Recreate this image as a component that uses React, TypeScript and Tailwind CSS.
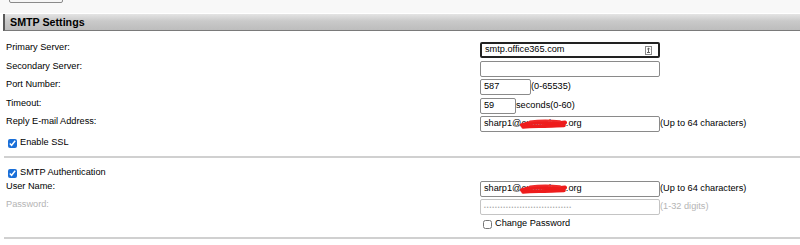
import React from 'react';

const font = { fontFamily: '"Liberation Sans", Arial, sans-serif' };

interface FieldRowProps {
    label: string;
    children: React.ReactNode;
    disabled?: boolean;
}

const FieldRow = ({ label, children, disabled }: FieldRowProps) => (
    <div className="flex items-start h-[18.5px]">
        <div className={`w-[480px] pl-[6px] leading-[11px] ${disabled ? 'text-[#b4b4b4]' : 'text-black'}`}>
            {label}
        </div>
        <div className="flex items-center">{children}</div>
    </div>
);

const Box = ({ w, children, focused, disabled }: { w: string; children?: React.ReactNode; focused?: boolean; disabled?: boolean }) => (
    <div
        className={`relative h-[16px] ${w} flex items-center px-[3px] rounded-[2px] ${
            focused
                ? 'border-2 border-[#222] px-[2px]'
                : disabled
                ? 'border border-[#c4c4c4]'
                : 'border border-[#8a8a8a]'
        }`}
    >
        {children}
    </div>
);

// red marker scribble that hides part of the address
const Scribble = () => (
    <svg className="absolute left-[39px] top-[2px]" width="48" height="11" viewBox="0 0 48 11">
        <path d="M2 6 C10 3 18 3 26 4 S40 4 45 3.5" stroke="#ee1c1c" strokeWidth="4" fill="none" strokeLinecap="round" />
        <path d="M3 8 C12 6.5 22 7.5 32 7 S42 6.5 44 6.5" stroke="#ee1c1c" strokeWidth="3.5" fill="none" strokeLinecap="round" />
        <path d="M10 2.5 C20 1.2 30 1.4 40 2.2" stroke="#f02a2a" strokeWidth="2" fill="none" strokeLinecap="round" />
    </svg>
);

const Check = ({ checked }: { checked: boolean }) => (
    <input
        type="checkbox"
        defaultChecked={checked}
        className="w-[9px] h-[9px] m-0 accent-[#1a6fd8] shrink-0"
    />
);

const App = () => {
    return (
        <div className="w-[800px] h-[245px] bg-white overflow-hidden text-[9.2px]" style={font}>
            {/* top strip with cut-off button */}
            <div className="h-[13px] bg-[#f8f8f8] overflow-hidden flow-root">
                <div className="ml-[9px] -mt-[14px] w-[54px] h-[17px] border border-[#8a8a8a] bg-[#f6f6f6] rounded-[2px]" />
            </div>

            {/* Section header */}
            <div className="mt-[1px] ml-[3px] h-[17px] border-l-2 border-[#5a5a5a] border-b border-b-[#7a7a7a] bg-[linear-gradient(to_bottom,#e4e4e4,#c9c9c9_45%,#bdbdbd)] flex items-center pl-[5px]">
                <span className="font-bold text-[10.7px] text-black">SMTP Settings</span>
            </div>

            <div className="pt-[11px]">
                <FieldRow label="Primary Server:">
                    <Box w="w-[180px]" focused>
                        <span>smtp.office365.com</span>
                        {/* autofill key icon */}
                        <svg className="absolute right-[6px] top-[2px]" width="7" height="9" viewBox="0 0 7 9">
                            <rect x="0.5" y="0.5" width="6" height="8" fill="none" stroke="#8a8a8a" />
                            <path d="M3.5 2 L3.5 6 M2.2 3.3 L3.5 2 L4.8 3.3 M2 6.5 L5 6.5" stroke="#555" strokeWidth="0.9" fill="none" />
                        </svg>
                    </Box>
                </FieldRow>
                <FieldRow label="Secondary Server:">
                    <Box w="w-[180px]" />
                </FieldRow>
                <FieldRow label="Port Number:">
                    <Box w="w-[51px]">587</Box>
                    <span>(0-65535)</span>
                </FieldRow>
                <FieldRow label="Timeout:">
                    <Box w="w-[36px]">59</Box>
                    <span>seconds(0-60)</span>
                </FieldRow>
                <FieldRow label="Reply E-mail Address:">
                    <Box w="w-[180px]">
                        <span>sharp1@exampleco.org</span>
                        <Scribble />
                    </Box>
                    <span>(Up to 64 characters)</span>
                </FieldRow>

                <div className="flex items-center gap-[3px] pl-[8px] mt-[3px] h-[11px]">
                    <Check checked />
                    <span>Enable SSL</span>
                </div>
            </div>

            <div className="ml-[4px] mt-[7px] h-[2px] bg-[#d0d0d0]" />

            <div className="pt-[10px]">
                <div className="flex items-center gap-[3px] pl-[8px] h-[11px]">
                    <Check checked />
                    <span>SMTP Authentication</span>
                </div>
                <div className="mt-[2px]">
                    <FieldRow label="User Name:">
                        <Box w="w-[180px]">
                            <span>sharp1@exampleco.org</span>
                            <Scribble />
                        </Box>
                        <span>(Up to 64 characters)</span>
                    </FieldRow>
                    <FieldRow label="Password:" disabled>
                        <Box w="w-[180px]" disabled>
                            <span className="text-[#a8a8a8] text-[5px] tracking-[1px] leading-none">••••••••••••••••••••••••••••••••</span>
                        </Box>
                        <span className="text-[#b4b4b4]">(1-32 digits)</span>
                    </FieldRow>
                    <div className="flex items-center gap-[3px] pl-[483px] h-[11px] mt-[1px]">
                        <input type="checkbox" className="w-[9px] h-[9px] m-0 shrink-0" />
                        <span>Change Password</span>
                    </div>
                </div>
            </div>

            <div className="ml-[4px] mt-[7px] h-[2px] bg-[#d0d0d0]" />
        </div>
    );
};

export default App;
